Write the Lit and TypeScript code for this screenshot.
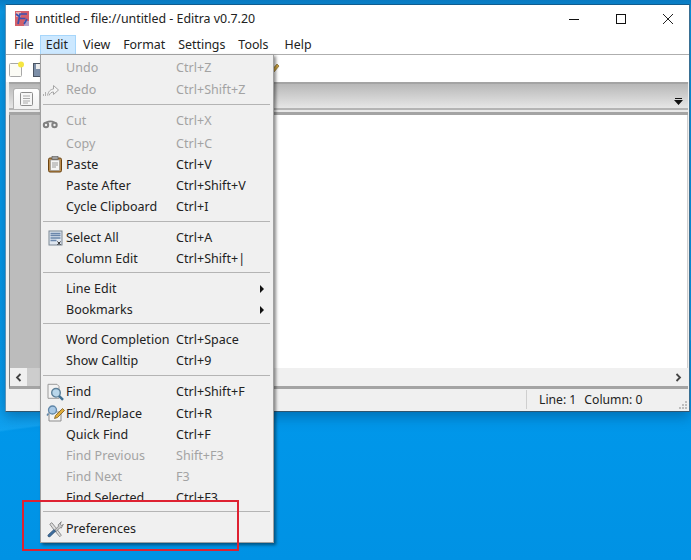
import { LitElement, html, css, svg } from "lit";
import { customElement } from "lit/decorators.js";

type Item =
  | { sep: true; h?: number; up?: number }
  | { label: string; key?: string; off?: boolean; icon?: string; sub?: boolean; h?: number; up?: boolean };

const icons: Record<string, unknown> = {
  redo: svg`<path d="M-1.500 16v-2M.500 16v-4" stroke="#b0b0b0" fill="none"/><path d="M2.500 15.500C3.500 11 5.500 9.500 8.500 9V5.500L13.500 10 8.500 14.500V12C6.500 12 5 13 4 15.500" fill="#f4f4f4" stroke="#a6a6a6"/>`,
  cut: svg`<g fill="none" stroke="#808080" stroke-width="2"><circle cx="1" cy="14" r="2.200"/><circle cx="9.500" cy="14" r="2.200"/></g><path d="M1 11.500c3-1.400 6-1.400 8.500 0" fill="none" stroke="#808080" stroke-width="1.600"/>`,
  paste: svg`<rect x="3.500" y="3" width="13" height="14" rx="1.500" fill="#b98c4e" stroke="#6b4310"/><rect x="5.500" y="5" width="9" height="10.500" fill="#f4f4f4" stroke="#8c8c8c" stroke-width=".6"/><rect x="7" y="1.500" width="6" height="3" fill="#a0a0a0" stroke="#555" stroke-width=".6"/><path d="M7 8h6M7 10h6M7 12h4" stroke="#9a9a9a"/>`,
  all: svg`<g transform="translate(1.500 .5)"><rect x="2.500" y="2.500" width="13" height="14" fill="#dfe6ef" stroke="#7b8794"/><path d="M4 5h10M4 7h10M4 9.500h10M4 12h6" stroke="#6a86ab" stroke-width="1.500"/><path d="M11 13l3 3.500M14 13l-3 3.500" stroke="#222"/></g>`,
  find: svg`<g transform="translate(1.500 .8)"><path d="M1.500 1.500h9l2 2v12h-11z" fill="#f3f3f3" stroke="#9a9a9a"/><circle cx="9.500" cy="10" r="4.300" fill="#b8d6ea" stroke="#5b7f98" stroke-width="1.400"/><path d="M12.500 13l4 4" stroke="#3f6f92" stroke-width="2.400"/></g>`,
  replace: svg`<g transform="translate(1.500 .5)"><path d="M2.500 7.500h12v9h-12z" fill="#f4f4f4" stroke="#8d8d8d"/><circle cx="6" cy="5.500" r="4" fill="#a9c9e6" stroke="#5f86a8" stroke-width="1.300"/><path d="M2 9l-1.500 2" stroke="#5f86a8" stroke-width="1.500"/><path d="M8 14l1-3 7-7 2 2-7 7z" fill="#e0ad3c" stroke="#7a5a1a" stroke-width=".8"/></g>`,
  prefs: svg`<g transform="translate(.8 1.200)"><path d="M6 2.500l4 5 5.500 7.500-1.500 1.500-6-7-4-5.500z" fill="#dedede" stroke="#777" stroke-width=".8"/><path d="M15.500 1.500l-3.200 3.200.5 1.200-4 4 1.500 1.500 4-4 1.200.5L17.500 4l-1.500 1.500-1.500-1.500z" fill="#c9c9c9" stroke="#6d6d6d" stroke-width=".7"/><path d="M8 9.500l-5.500 5c-1.200 1.200.5 3 1.800 1.800l5.500-5.300z" fill="#3d6d9e" stroke="#27496b" stroke-width=".7"/></g>`,
};

const items: Item[] = [
  { label: "Undo", key: "Ctrl+Z", off: true, h: 22, up: true },
  { label: "Redo", key: "Ctrl+Shift+Z", off: true, icon: "redo", h: 21 },
  { sep: true },
  { label: "Cut", key: "Ctrl+X", off: true, icon: "cut", h: 23, up: true },
  { label: "Copy", key: "Ctrl+C", off: true, h: 21 },
  { label: "Paste", key: "Ctrl+V", icon: "paste" },
  { label: "Paste After", key: "Ctrl+Shift+V" },
  { label: "Cycle Clipboard", key: "Ctrl+I" },
  { sep: true },
  { label: "Select All", key: "Ctrl+A", icon: "all" },
  { label: "Column Edit", key: "Ctrl+Shift+|" },
  { sep: true, h: 9 },
  { label: "Line Edit", sub: true },
  { label: "Bookmarks", sub: true },
  { sep: true, h: 9 },
  { label: "Word Completion", key: "Ctrl+Space" },
  { label: "Show Calltip", key: "Ctrl+9" },
  { sep: true },
  { label: "Find", key: "Ctrl+Shift+F", icon: "find", h: 22, up: true },
  { label: "Find/Replace", key: "Ctrl+R", icon: "replace" },
  { label: "Quick Find", key: "Ctrl+F" },
  { label: "Find Previous", key: "Shift+F3", off: true },
  { label: "Find Next", key: "F3", off: true },
  { label: "Find Selected", key: "Ctrl+F3" },
  { sep: true, up: 4 },
  { label: "Preferences", icon: "prefs" },
];

const menus = ["File", "Edit", "View", "Format", "Settings", "Tools", "Help"];

@customElement("app-root")
export class AppRoot extends LitElement {
  static styles = css`
    :host {
      display: block;
      width: 691px;
      height: 560px;
      overflow: hidden;
      position: relative;
      font-family: "Noto Sans", "Open Sans", sans-serif;
      font-size: 12.5px;
      color: #222;
      background:
        linear-gradient(-7.5deg, rgba(255,255,255,0) 0 33.6%, rgba(60,190,255,.28) 33.9%, rgba(60,190,255,.1) 40%, rgba(60,190,255,0) 60%),
        linear-gradient(180deg, #0a7cc4 0, #0a9be8 12px, #0097ea 420px, #0092e4 100%);
    }
    .desk { padding: 4px 1px 0 5px; }
    .win {
      height: 408px;
      display: flex;
      flex-direction: column;
      background: #f0f0f0;
      border-top: 1px solid #0f5c8f;
      border-right: 1px solid #3a6f92;
      border-bottom: 1px solid #30566f;
      border-left: 1px solid #5a92b8;
      box-sizing: border-box;
      box-shadow: 0 5px 12px rgba(0, 40, 80, .35);
    }
    .title {
      height: 30px;
      flex: none;
      background: #fff;
      display: flex;
      align-items: center;
      padding-left: 9px;
      gap: 6px;
      font-size: 12.4px;
    }
    .title .logo { width: 14px; height: 15px; flex: none; margin-top: -3px; }
    .title .txt { flex: 1; margin-top: -3px; }
    .ctl { display: flex; height: 30px; align-items: center; }
    .ctl svg { width: 46px; height: 30px; display: block; margin-top: -2px; }
    .menubar {
      height: 19px;
      flex: none;
      background: #fff;
      display: flex;
      align-items: stretch;
      font-size: 12.4px;
      line-height: 17px;
      padding-left: 1px;
    }
    .mi { padding: 0 6px 2px; display: flex; align-items: center; border: 1px solid transparent; border-bottom: 0; box-sizing: border-box; margin-right: -1px; }
    .mi.on { background: #cce8ff; border-color: #a6d6fb; padding: 0 7px 2px 5px; margin-right: 0; }
    .mi:last-child { margin-left: 3px; }
    .tb {
      height: 28px;
      flex: none;
      background: #fff;
      border-top: 1px solid #aeaeae;
      box-sizing: border-box;
      display: flex;
      align-items: center;
      padding-left: 3px;
      gap: 7px;
    }
    .tb svg { width: 16px; height: 18px; display: block; }
    .tb .pen { margin-left: 215px; width: 10px; height: 14px; }
    .nb { flex: 1; min-height: 0; display: flex; flex-direction: column; padding: 0 1px 0 3px; }
    .strip {
      height: 33px;
      flex: none;
      border-top: 2px solid #a4a4a4;
      border-bottom: 3px solid #a4a4a4;
      box-sizing: border-box;
      background: linear-gradient(180deg, #b8b8b8 0, #e6e6e6 24px, #b4b4b4 24px, #b4b4b4 26px, #e8e8e8 26px);
      display: flex;
      justify-content: space-between;
      padding: 4px 5px 0 4px;
    }
    .tab {
      width: 27px;
      height: 21px;
      background: linear-gradient(180deg, #fff, #f1f1f1);
      border: 1px solid #b0b0b0;
      border-bottom: 0;
      border-radius: 3px 3px 0 0;
      box-sizing: border-box;
      display: flex;
      justify-content: center;
      padding-top: 2px;
    }
    .tab svg { width: 15px; height: 16px; }
    .caret { width: 9px; height: 7px; margin-top: 10px; }
    .edit {
      flex: 1;
      min-height: 0;
      display: flex;
      background: #fff;
      border-left: 1px solid #7f7f7f;
      border-right: 1px solid #cfcfcf;
    }
    .gutter { width: 30px; background: #bcbcbc; flex: none; }
    .hs {
      height: 18px;
      flex: none;
      background: #f0f0f0;
      border-left: 1px solid #7f7f7f;
      border-bottom: 3px solid #a4a4a4;
      box-sizing: content-box;
      display: flex;
      align-items: center;
      justify-content: space-between;
      padding: 0 6px 0 5px;
    }
    .hs svg { width: 7px; height: 9px; }
    .thumb { position: absolute; left: 27px; top: 368px; width: 13px; height: 18px; background: #cdcdcd; }
    .status {
      height: 22px;
      flex: none;
      display: flex;
      align-items: center;
      justify-content: flex-end;
      position: relative;
      font-size: 12.2px;
      padding-bottom: 1px;
      box-sizing: border-box;
    }
    .cell { width: 163px; box-sizing: border-box; padding-left: 12px; border-left: 1px solid #cfcfcf; height: 19px; line-height: 19px; }
    .cell span { margin-left: 8px; }
    .grip { position: absolute; right: 1px; bottom: 1px; width: 10px; height: 10px; }
    .menu {
      position: absolute;
      left: 40px;
      top: 54px;
      width: 234px;
      height: 489px;
      box-sizing: border-box;
      background: #f0f0f0;
      border: 1px solid #a0a0a0;
      box-shadow: 2px 2px 3px rgba(0, 0, 0, .45);
      padding-top: 2px;
      font-size: 12.5px;
    }
    .row { display: flex; align-items: center; height: 21px; position: relative; padding-left: 25px; letter-spacing: .04px; box-sizing: border-box; }
    .row.up { padding-bottom: 2px; }
    .row.off { color: #a3a3a3; }
    .row .l { width: 110px; flex: none; white-space: nowrap; }
    .row svg.i { position: absolute; left: 4px; top: 1px; width: 18px; height: 18px; overflow: visible; }
    .row .arrow { position: absolute; left: 219px; top: 7px; width: 0; height: 0; border-left: 4px solid #111; border-top: 4px solid transparent; border-bottom: 4px solid transparent; }
    .sep { display: flex; align-items: center; height: 10px; padding: 0 3px 2px 2px; box-sizing: border-box; }
    .sep i { display: block; height: 1px; flex: 1; background: #b4b4b4; }
    .red { position: absolute; left: 22px; top: 500px; width: 217px; height: 51px; box-sizing: border-box; border: 2px solid #de2131; }
  `;

  renderRow(it: Item) {
    if ("sep" in it) {
      const st = (it.h ? `height:${it.h}px;` : "") + (it.up ? `padding-bottom:${it.up}px;` : "");
      return html`<div class="sep" style=${st}><i></i></div>`;
    }
    return html`<div class="row ${it.off ? "off" : ""} ${it.up ? "up" : ""}" style=${it.h ? `height:${it.h}px` : ""}>
      ${it.icon ? html`<svg class="i" viewBox="0 0 18 18">${icons[it.icon]}</svg>` : ""}
      <span class="l">${it.label}</span>
      ${it.key ? html`<span>${it.key}</span>` : ""}
      ${it.sub ? html`<span class="arrow"></span>` : ""}
    </div>`;
  }

  render() {
    return html`
      <div class="desk">
        <div class="win">
          <div class="title">
            <svg class="logo" viewBox="0 0 14 15">
              <rect width="14" height="15" fill="#d4606a"/>
              <rect x="1" y="1" width="5" height="5" fill="#e9b0b0"/>
              <rect x="9" y="10" width="5" height="5" fill="#b8a0c8"/>
              <path d="M3 13L5 3h7M4.500 7.500h6M1 3l4 3M9 13l3-5" stroke="#3a52b0" stroke-width="1.700" fill="none"/>
            </svg>
            <span class="txt">untitled - file://untitled - Editra v0.7.20</span>
            <div class="ctl">
              <svg viewBox="0 0 46 30"><path d="M18 15.500h10" stroke="#111"/></svg>
              <svg viewBox="0 0 46 30"><rect x="19.500" y="10.500" width="9" height="9" fill="none" stroke="#111"/></svg>
              <svg viewBox="0 0 46 30"><path d="M20 10l10 10M30 10L20 20" stroke="#222" fill="none"/></svg>
            </div>
          </div>
          <div class="menubar">
            ${menus.map((m) => html`<div class="mi ${m === "Edit" ? "on" : ""}">${m}</div>`)}
          </div>
          <div class="tb">
            <svg viewBox="0 0 16 18">
              <rect x="0.500" y="3.500" width="12" height="13" rx="1" fill="#fbfbf5" stroke="#a8a8a8"/>
              <circle cx="12" cy="4.500" r="3" fill="#f5e642"/>
            </svg>
            <svg viewBox="0 0 16 18">
              <rect x="1.500" y="3.500" width="13" height="13" fill="#7d8fa8" stroke="#4b5563"/>
              <rect x="4" y="4" width="8" height="5" fill="#eee"/>
            </svg>
            <svg class="pen" viewBox="0 0 10 14">
              <path d="M1 12l1-4 5-6 2 2-5 6z" fill="#d0a540" stroke="#8a7436" stroke-width=".8"/>
            </svg>
          </div>
          <div class="nb">
            <div class="strip">
              <div class="tab">
                <svg viewBox="0 0 15 16">
                  <rect x="1.500" y="1.500" width="12" height="13" rx="1" fill="#f6f6f6" stroke="#8c8c8c"/>
                  <path d="M4 5h7M4 7.500h7M4 10h7M4 12h5" stroke="#a8a8a8"/>
                </svg>
              </div>
              <svg class="caret" viewBox="0 0 9 7"><path d="M1 0h7v1H1zM0 2h9L4.500 7z" fill="#111"/></svg>
            </div>
            <div class="edit"><div class="gutter"></div></div>
            <div class="hs">
              <svg viewBox="0 0 7 9"><path d="M5.500 1L2 4.500 5.500 8" fill="none" stroke="#444" stroke-width="1.800"/></svg>
              <svg viewBox="0 0 7 9"><path d="M1.500 1L5 4.500 1.500 8" fill="none" stroke="#444" stroke-width="1.800"/></svg>
            </div>
          </div>
          <div class="status">
            <div class="cell">Line: 1<span>Column: 0</span></div>
            <svg class="grip" viewBox="0 0 10 10"><path d="M7 1h2v2H7zM4 4h2v2H4zM7 4h2v2H7zM1 7h2v2H1zM4 7h2v2H4zM7 7h2v2H7z" fill="#bdbdbd"/></svg>
          </div>
        </div>
      </div>
      <div class="thumb"></div>
      <div class="menu">${items.map((it) => this.renderRow(it))}</div>
      <div class="red"></div>
    `;
  }
}
